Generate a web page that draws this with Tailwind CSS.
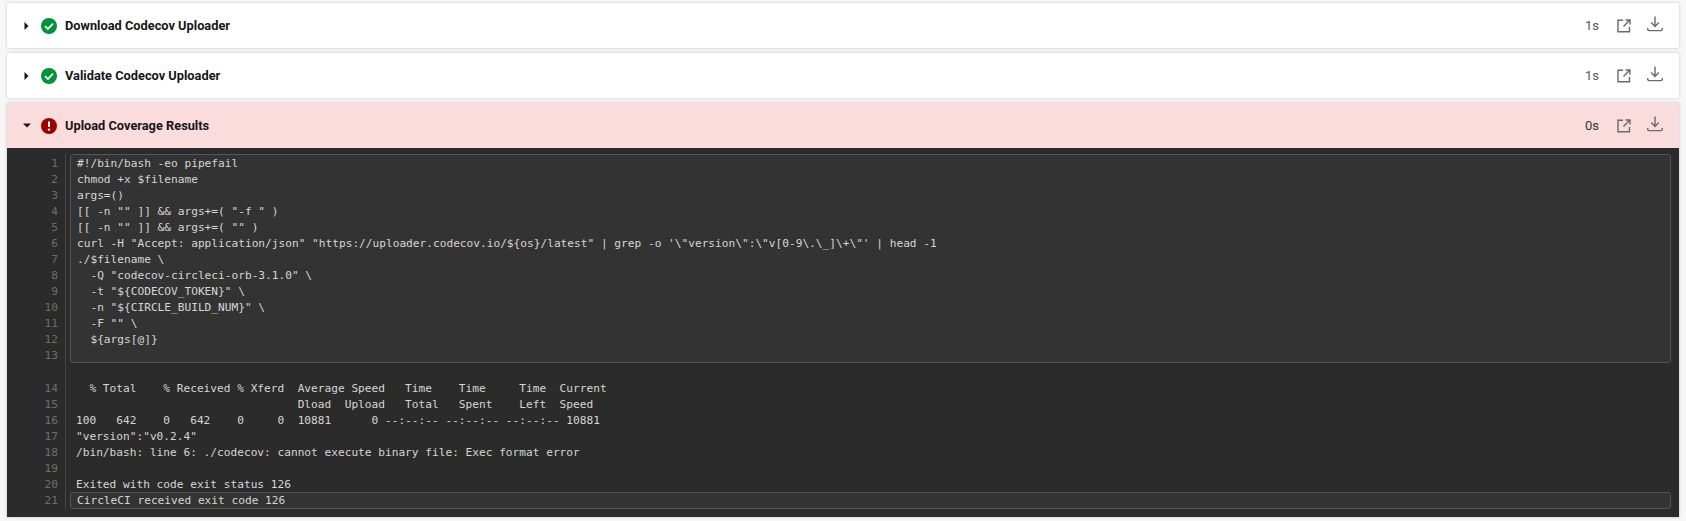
<!DOCTYPE html>
<html>
  <head>
    <title>Upload Coverage Results</title>
    <script src="https://cdn.jsdelivr.net/npm/@tailwindcss/browser@4"></script>
  </head>
  <body class="bg-[#f7f7f7] h-[521px] overflow-hidden font-['Roboto',sans-serif]">
    <div class="pt-[3px] pl-[7px] w-[1679px] flex flex-col gap-[5px]">

      <!-- passed step -->
      <div class="h-[45px] bg-white rounded-[2px] shadow-[0_0_3px_rgba(0,0,0,0.22)] flex items-center pl-[17px] pr-[16px]">
        <svg class="w-[5px] h-[8px]" viewBox="0 0 5 8"><path d="M0.5 0L4.5 4L0.5 8Z" fill="#161616"/></svg>
        <svg class="w-4 h-4 ml-[12px]" viewBox="0 0 16 16"><circle cx="8" cy="8" r="8" fill="#039139"/><path d="M4 8.2L6.9 11L12 5.6" fill="none" stroke="white" stroke-width="1.8"/></svg>
        <span class="ml-[8px] mt-[2px] text-[12.8px] font-bold text-[#161616] leading-none">Download Codecov Uploader</span>
        <span class="ml-auto text-[13px] text-[#555555]">1s</span>
        <svg class="w-[14px] h-[14px] ml-[18px] mt-px" viewBox="0 0 14 14" fill="none" stroke="#6a6a6a" stroke-width="1.4"><path d="M6 1.2H1V12.8H12.5V8"/><path d="M6.5 7.5L12.4 1.6M8.6 1H13V5.4"/></svg>
        <svg class="w-4 h-4 ml-[16px] -mt-[3px]" viewBox="0 0 16 16" fill="none" stroke="#6a6a6a" stroke-width="1.4"><path d="M8 0.5V10M4.2 6.6L8 10.4L11.8 6.6"/><path d="M0.7 12V13.2Q0.7 14.6 2.2 14.6H13.8Q15.3 14.6 15.3 13.2V12"/></svg>
      </div>

      <div class="h-[45px] bg-white rounded-[2px] shadow-[0_0_3px_rgba(0,0,0,0.22)] flex items-center pl-[17px] pr-[16px]">
        <svg class="w-[5px] h-[8px]" viewBox="0 0 5 8"><path d="M0.5 0L4.5 4L0.5 8Z" fill="#161616"/></svg>
        <svg class="w-4 h-4 ml-[12px]" viewBox="0 0 16 16"><circle cx="8" cy="8" r="8" fill="#039139"/><path d="M4 8.2L6.9 11L12 5.6" fill="none" stroke="white" stroke-width="1.8"/></svg>
        <span class="ml-[8px] mt-[2px] text-[12.8px] font-bold text-[#161616] leading-none">Validate Codecov Uploader</span>
        <span class="ml-auto text-[13px] text-[#555555]">1s</span>
        <svg class="w-[14px] h-[14px] ml-[18px] mt-px" viewBox="0 0 14 14" fill="none" stroke="#6a6a6a" stroke-width="1.4"><path d="M6 1.2H1V12.8H12.5V8"/><path d="M6.5 7.5L12.4 1.6M8.6 1H13V5.4"/></svg>
        <svg class="w-4 h-4 ml-[16px] -mt-[3px]" viewBox="0 0 16 16" fill="none" stroke="#6a6a6a" stroke-width="1.4"><path d="M8 0.5V10M4.2 6.6L8 10.4L11.8 6.6"/><path d="M0.7 12V13.2Q0.7 14.6 2.2 14.6H13.8Q15.3 14.6 15.3 13.2V12"/></svg>
      </div>

      <!-- failed step -->
      <div class="shadow-[0_0_3px_rgba(0,0,0,0.22)]">
        <div class="h-[45px] bg-[#fbdcdc] flex items-center pl-[16px] pr-[16px]">
          <svg class="w-[8px] h-[5px]" viewBox="0 0 8 5"><path d="M0 0.5H8L4 4.5Z" fill="#161616"/></svg>
          <svg class="w-4 h-4 ml-[10px]" viewBox="0 0 16 16"><circle cx="8" cy="8" r="8" fill="#9b0000"/><path d="M8 3.6V9" stroke="white" stroke-width="2"/><circle cx="8" cy="11.6" r="1.2" fill="white"/></svg>
          <span class="ml-[8px] mt-[2px] text-[12.8px] font-bold text-[#161616] leading-none">Upload Coverage Results</span>
          <span class="ml-auto text-[13px] text-[#333333]">0s</span>
          <svg class="w-[14px] h-[14px] ml-[18px] mt-px" viewBox="0 0 14 14" fill="none" stroke="#6a6a6a" stroke-width="1.4"><path d="M6 1.2H1V12.8H12.5V8"/><path d="M6.5 7.5L12.4 1.6M8.6 1H13V5.4"/></svg>
          <svg class="w-4 h-4 ml-[16px] -mt-[3px]" viewBox="0 0 16 16" fill="none" stroke="#6a6a6a" stroke-width="1.4"><path d="M8 0.5V10M4.2 6.6L8 10.4L11.8 6.6"/><path d="M0.7 12V13.2Q0.7 14.6 2.2 14.6H13.8Q15.3 14.6 15.3 13.2V12"/></svg>
        </div>

        <div class="bg-[#2b2b2b] h-[369px] pt-[6px] flex font-['DejaVu_Sans_Mono',monospace] text-[11.17px] leading-[16px]">
          <!-- line numbers -->
          <div class="w-[59px] h-[355px] border-r border-[#444444] pr-[7px] text-right text-[#6e6e6e] shrink-0">
            <div class="pt-[2px]">1</div><div>2</div><div>3</div><div>4</div><div>5</div><div>6</div><div>7</div><div>8</div><div>9</div><div>10</div><div>11</div><div>12</div><div>13</div>
            <div class="mt-[17px]">14</div><div>15</div><div>16</div><div>17</div><div>18</div><div>19</div><div>20</div><div>21</div>
          </div>

          <div class="flex-1 pl-[4px] pr-[8px] text-[#d6d6d6]">
            <pre class="h-[209px] font-['DejaVu_Sans_Mono',monospace] bg-[#333333] border border-[#555555] rounded-[3px] pl-[6px] pt-px">#!/bin/bash -eo pipefail
chmod +x $filename
args=()
[[ -n "" ]] &amp;&amp; args+=( "-f " )
[[ -n "" ]] &amp;&amp; args+=( "" )
curl -H "Accept: application/json" "https://uploader.codecov.io/${os}/latest" | grep -o '\"version\":\"v[0-9\.\_]\+\"' | head -1
./$filename \
  -Q "codecov-circleci-orb-3.1.0" \
  -t "${CODECOV_TOKEN}" \
  -n "${CIRCLE_BUILD_NUM}" \
  -F "" \
  ${args[@]}
</pre>
            <pre class="mt-[18px] pl-[6px] h-[111px] font-['DejaVu_Sans_Mono',monospace]">  % Total    % Received % Xferd  Average Speed   Time    Time     Time  Current
                                 Dload  Upload   Total   Spent    Left  Speed
100   642    0   642    0     0  10881      0 --:--:-- --:--:-- --:--:-- 10881
"version":"v0.2.4"
/bin/bash: line 6: ./codecov: cannot execute binary file: Exec format error

Exited with code exit status 126</pre>
            <pre class="h-[17px] font-['DejaVu_Sans_Mono',monospace] bg-[#333333] border border-[#555555] rounded-[3px] pl-[6px] leading-[16px]">CircleCI received exit code 126</pre>
          </div>
        </div>
      </div>
    </div>
  </body>
</html>
